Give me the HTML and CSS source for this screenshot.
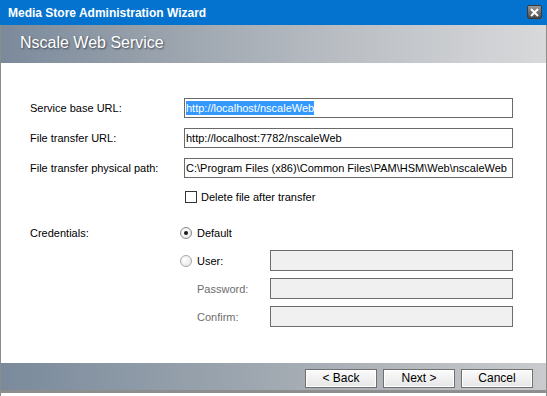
FILE: index.html
```html
<!DOCTYPE html>
<html lang="en">
<head>
    <meta charset="UTF-8">
    <title>Media Store Administration Wizard</title>
  <link rel="stylesheet" href="styles.css">
</head>
<body>

<div class="wizard">
    <div class="titlebar">
        <span class="caption">Media Store Administration Wizard</span>
        <span class="close">
            <svg width="9" height="9" viewBox="0 0 9 9">
                <path d="M1 1 L8 8 M8 1 L1 8" stroke="#fff" stroke-width="2"/>
            </svg>
        </span>
    </div>

    <div class="frame">
        <div class="banner">
            <h3 class="heading">Nscale Web Service</h3>
        </div>

        <div class="content">
            <div class="fields">
                <label class="lbl">Service base URL:</label>
                <div class="box"><span class="sel">http://localhost/nscaleWeb</span></div>

                <label class="lbl">File transfer URL:</label>
                <div class="box">http://localhost:7782/nscaleWeb</div>

                <label class="lbl">File transfer physical path:</label>
                <div class="box">C:\Program Files (x86)\Common Files\PAM\HSM\Web\nscaleWeb</div>
            </div>

            <div class="check-row">
                <span class="check"></span>
                <span>Delete file after transfer</span>
            </div>

            <div class="creds">
                <span class="lbl">Credentials:</span>
                <span class="radio on"></span>
                <span class="opt">Default</span>
                <span></span>

                <span></span>
                <span class="radio"></span>
                <span class="opt">User:</span>
                <div class="box off"></div>

                <span></span>
                <span></span>
                <span class="opt dim">Password:</span>
                <div class="box off"></div>

                <span></span>
                <span></span>
                <span class="opt dim">Confirm:</span>
                <div class="box off"></div>
            </div>
        </div>

        <div class="footer">
            <button class="btn" type="button">&lt; Back</button>
            <button class="btn" type="button">Next &gt;</button>
            <button class="btn" type="button">Cancel</button>
        </div>
    </div>
</div>

</body>
</html>
```

FILE: styles.css
```css
*{
    padding: 0;
    margin: 0;
    box-sizing: border-box;
}
body {
    background: #fff;
    font-family: "Liberation Sans", Arial, sans-serif;
    font-size: 11px;
    color: #000;
}

.wizard{
    width: 547px;
    height: 396px;
    display: flex;
    flex-direction: column;
}

.titlebar{
    height: 25px;
    background-color: #0473cf;
    display: flex;
    align-items: center;
    justify-content: space-between;
    padding: 0 5px 0 8px;
}

.caption{
    color: #fff;
    font-weight: bold;
    font-size: 12px;
}

.close{
    width: 15px;
    height: 14px;
    margin-top: -1px;
    border-radius: 2px;
    border: 1px solid #3a3a3a;
    background: linear-gradient(#9a9a9a, #4a4a4a);
    display: flex;
    align-items: center;
    justify-content: center;
}

.frame{
    flex: 1;
    display: flex;
    flex-direction: column;
    border-left: 1px solid #8c8c8c;
    border-right: 1px solid #8c8c8c;
}

.banner{
    height: 38px;
    background: linear-gradient(90deg, #7b8a9b 0%, #9aa3ad 30%, #bcc0c5 65%, #d8d9db 100%);
    padding: 9px 0 0 19px;
}

.heading{
    color: #fff;
    font-weight: normal;
    font-size: 16px;
    text-shadow: 1px 1px 2px #3a4350;
}

.content{
    height: 300px;
    background: #fff;
    padding: 35px 0 0 29px;
}

.fields{
    display: grid;
    grid-template-columns: 154px 329px;
    grid-auto-rows: 20px;
    row-gap: 10px;
    align-items: center;
}

.box{
    height: 20px;
    border: 1px solid #6a6a6a;
    background: #fff;
    padding: 0 0 0 1px;
    display: flex;
    align-items: center;
    white-space: nowrap;
    overflow: hidden;
}

.sel{
    background: #3399ff;
    color: #fff;
    padding: 1px 0;
}

.check-row{
    display: flex;
    align-items: center;
    gap: 4px;
    height: 12px;
    margin: 13px 0 0 155px;
}

.check{
    width: 12px;
    height: 12px;
    border: 1px solid #333;
    background: #fff;
}

.creds{
    display: grid;
    grid-template-columns: 150px 17px 73px 243px;
    grid-template-rows: 20px 21px 21px 21px;
    row-gap: 7px;
    align-items: center;
    margin-top: 20px;
}

.radio{
    width: 12px;
    height: 12px;
    border-radius: 50%;
    border: 1px solid #a8a8a8;
    background: radial-gradient(circle at 35% 35%, #fff, #e2e2e2);
    display: flex;
    align-items: center;
    justify-content: center;
}

.radio.on{
    border-color: #8a8a8a;
}

.radio.on::after{
    content: "";
    width: 4px;
    height: 4px;
    border-radius: 50%;
    background: #1a1a1a;
}

.dim{
    color: #6d6d6d;
}

.box.off{
    height: 21px;
    background: #f0f0f0;
    border-color: #6d6d6d;
}

.footer{
    height: 30px;
    background: linear-gradient(90deg, #7a8a9c 0%, #95a0ab 35%, #adb2b8 65%, #c9cbce 100%);
    border-bottom: 3px solid #8e8e8e;
    display: flex;
    align-items: center;
    justify-content: flex-end;
    gap: 6px;
    padding: 0 13px 0 0;
}

.btn{
    width: 72px;
    height: 19px;
    margin-top: 3px;
    border: 1px solid #707070;
    background: linear-gradient(#fbfbfb, #e6e6e6);
    box-shadow: inset 0 0 0 1px #fff;
    font-family: "Liberation Sans", Arial, sans-serif;
    font-size: 12px;
    color: #000;
}
```
